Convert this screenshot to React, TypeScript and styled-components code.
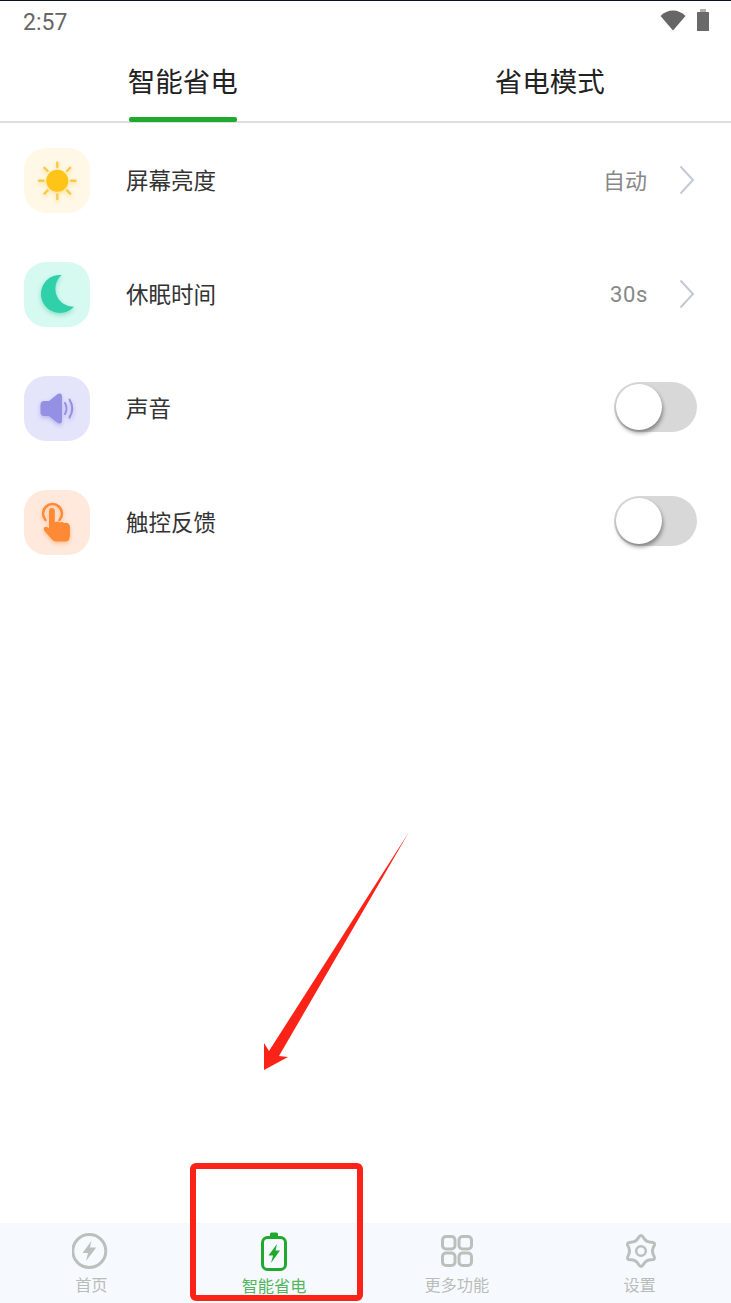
import styled, { createGlobalStyle } from 'styled-components';
import { ReactNode } from 'react';

const GlobalStyle = createGlobalStyle`
	html, body {
		margin: 0;
		padding: 0;
		background: #ffffff;
	}
	* {
		box-sizing: border-box;
	}
`;

const FONT = `"Noto Sans CJK SC", "Noto Sans", sans-serif`;

const Page = styled.div`
	position: relative;
	width: 731px;
	height: 1303px;
	display: flex;
	flex-direction: column;
	overflow: hidden;
	background: #ffffff;
	font-family: ${FONT};
	border-top: 1px solid #0c1220;
`;

const StatusBar = styled.div`
	height: 43px;
	padding: 0 22px 0 23px;
	display: flex;
	align-items: center;
	justify-content: space-between;
`;

const Clock = styled.span`
	font-family: Roboto, sans-serif;
	font-size: 23px;
	color: #666666;
`;

const StatusIcons = styled.div`
	display: flex;
	align-items: center;
	gap: 11px;
	padding-bottom: 5px;

	svg {
		display: block;
	}
`;

const Tabs = styled.div`
	height: 79px;
	display: grid;
	grid-template-columns: 1fr 1fr;
	border-bottom: 2px solid #dedede;
`;

const Tab = styled.div`
	display: flex;
	justify-content: center;

	& + & {
		padding-left: 3px;
	}
`;

const TabLabel = styled.div<{ $active?: boolean }>`
	position: relative;
	height: 78px;
	padding-bottom: 4px;
	display: flex;
	align-items: center;
	font-size: 27.5px;
	line-height: 1;
	color: #222222;

	&::after {
		content: '';
		display: ${(p) => (p.$active ? 'block' : 'none')};
		position: absolute;
		left: 1px;
		right: 1px;
		bottom: 0;
		height: 5px;
		border-radius: 2px;
		background: #20a92f;
	}
`;

const List = styled.div`
	display: flex;
	flex-direction: column;
	flex: 1;
`;

const Row = styled.div`
	height: 114px;
	padding: 0 36px 0 24px;
	display: flex;
	align-items: center;
`;

const IconTile = styled.div<{ $bg: string }>`
	width: 66px;
	height: 65px;
	border-radius: 22px;
	background: ${(p) => p.$bg};
	flex-shrink: 0;
	svg {
		display: block;
	}
`;

const RowLabel = styled.div`
	margin-left: 36px;
	padding-bottom: 3px;
	flex: 1;
	font-size: 22.5px;
	color: #333333;
`;

const RowValue = styled.div`
	font-size: 22px;
	padding-bottom: 3px;
	color: #888888;
	margin-right: 32px;
`;

const LatinValue = styled(RowValue)`
	font-family: Roboto, sans-serif;
	padding: 1px 0 0;
	margin-right: 31px;
	letter-spacing: 0.6px;
`;

const Toggle = styled.div`
	width: 83px;
	height: 50px;
	margin: 0 -2px 2px 0;
	padding-left: 2px;
	border-radius: 25px;
	background: #d8d8d8;
	display: flex;
	align-items: center;
`;

const ToggleKnob = styled.div`
	width: 46px;
	height: 46px;
	border-radius: 50%;
	background: #ffffff;
	box-shadow: 1px 3px 4px rgba(0, 0, 0, 0.4);
`;

const BottomNav = styled.nav`
	height: 80px;
	background: #f6faff;
	display: grid;
	grid-template-columns: repeat(4, 1fr);
`;

const NavItem = styled.div`
	display: flex;
	flex-direction: column;
	align-items: center;
	svg {
		display: block;
		margin-top: 9px;
	}
`;

const NavLabel = styled.span<{ $active?: boolean }>`
	font-size: 16.25px;
	line-height: 20px;
	margin-top: 4px;
	color: ${(p) => (p.$active ? '#55b45e' : '#b9bdb9')};
`;

const Highlight = styled.div`
	position: absolute;
	left: 190px;
	top: 1162px;
	width: 173px;
	height: 138px;
	border: 6px solid #fb2318;
	border-radius: 6px;
`;

const ArrowOverlay = styled.svg`
	position: absolute;
	left: 0;
	top: -1px;
	pointer-events: none;
`;

const Chevron = () => (
	<svg width="16" height="30" viewBox="0 0 16 30" fill="none">
		<path d="M1.5 1.5 L14 15 L1.5 28.5" stroke="#c3c8d2" strokeWidth="2" />
	</svg>
);

const SunIcon = () => (
	<svg width="66" height="65" viewBox="0 0 66 65" fill="none">
		<g style={{ filter: 'drop-shadow(0 2px 2px rgba(250,190,40,0.45))' }}>
			<circle cx="33.3" cy="32.7" r="11" fill="#fec418" />
			<g stroke="#fcc84a" strokeWidth="2.4" strokeLinecap="round">
				<path d="M33.3 14.5v4.5M33.3 46.5v4.5M15 32.7h4.5M47 32.7h4.5" />
				<path d="M20.4 19.8l3.2 3.2M43 42.4l3.2 3.2M20.4 45.6l3.2-3.2M43 23l3.2-3.2" />
			</g>
		</g>
	</svg>
);

const MoonIcon = () => (
	<svg width="66" height="65" viewBox="0 0 66 65" fill="none">
		<path
			d="M37.7 13 A19 19 0 1 0 50 44.7 A18 18 0 0 1 37.7 13 Z"
			fill="#2fd0aa"
			style={{ filter: 'drop-shadow(0 2px 2px rgba(40,190,150,0.45))' }}
		/>
	</svg>
);

const SpeakerIcon = () => (
	<svg width="66" height="65" viewBox="0 0 66 65" fill="none">
		<g style={{ filter: 'drop-shadow(0 2px 2px rgba(130,125,225,0.45))' }}>
			<path
				d="M20 25 h5 L33 18.5 c3-2 5-1 5 2 v24 c0 3-2 4-5 2 L25 40 h-5 c-2 0-3.5-1.5-3.5-3.5 v-8 c0-2 1.5-3.5 3.5-3.5z"
				fill="#9490e4"
			/>
			<path d="M41 27 q3 5.5 0 11M45.5 23.5 q5.5 9 0 18" stroke="#9490e4" strokeWidth="2" strokeLinecap="round" />
		</g>
	</svg>
);

const TouchIcon = () => (
	<svg width="66" height="65" viewBox="0 0 66 65" fill="none">
		<g style={{ filter: 'drop-shadow(0 2px 2px rgba(255,130,50,0.4))' }}>
			<path d="M21.5 30 a9.5 9.5 0 1 1 14 0" stroke="#ff8a35" strokeWidth="2.5" strokeLinecap="round" />
			<path
				d="M25 21 a2.9 2.9 0 0 1 5.8 0 v11 l1 0 q2.2-1 4 .4 q2.4-1.2 4.5 .6 q2.8-.8 4.5 1 q1.2 1 1.2 3 V44 q0 7.5 -4 7.5 H32 q-2.5 0-4-2 L20.5 41 q-1.5-2 -.5-3.5 q1.5-1.5 4 0 l1 .8 z"
				fill="#ff8a35"
			/>
		</g>
	</svg>
);

const HomeIcon = () => (
	<svg width="38" height="38" viewBox="0 0 38 38" fill="none">
		<circle cx="17.3" cy="19" r="16.5" stroke="#bcc0bc" strokeWidth="3" />
		<path d="M19.5 8.7 L10.5 21 H16 L14 29 L24.3 15.5 H18 Z" fill="#bcc0bc" />
	</svg>
);

const BatteryIcon = () => (
	<svg width="38" height="39" viewBox="0 0 38 39" fill="none">
		<path d="M15 2 q0-1.5 1.5-1.5 h5 q1.5 0 1.5 1.5 v2.5 h-8z" fill="#20a92f" />
		<rect x="7.5" y="5.5" width="23" height="32" rx="5" stroke="#20a92f" strokeWidth="3" />
		<path d="M22 12 L13.5 23.5 H18 L16 31 L25 18.5 H20.5 Z" fill="#20a92f" />
	</svg>
);

const GridIcon = () => (
	<svg width="38" height="38" viewBox="0 0 38 38" fill="none">
		<g stroke="#bcc0bc" strokeWidth="3">
			<rect x="4.5" y="4.5" width="12.5" height="12.5" rx="3.5" />
			<rect x="21" y="4.5" width="12.5" height="12.5" rx="3.5" />
			<rect x="4.5" y="21" width="12.5" height="12.5" rx="3.5" />
			<rect x="21" y="21" width="12.5" height="12.5" rx="3.5" />
		</g>
	</svg>
);

// six soft lobes, traced through the midpoints of an alternating star
const gearPath = (() => {
	const nodes = Array.from({ length: 12 }, (_, i) => {
		const angle = ((i * 30 - 90) * Math.PI) / 180;
		const r = i % 2 === 0 ? 17.7 : 10.2;
		return [20 + r * Math.cos(angle), 19 + r * Math.sin(angle)];
	});
	const mid = (a: number[], b: number[]) => [(a[0] + b[0]) / 2, (a[1] + b[1]) / 2];
	const start = mid(nodes[11], nodes[0]);
	let d = `M${start[0].toFixed(2)} ${start[1].toFixed(2)}`;
	nodes.forEach((n, i) => {
		const m = mid(n, nodes[(i + 1) % 12]);
		d += ` Q${n[0].toFixed(2)} ${n[1].toFixed(2)} ${m[0].toFixed(2)} ${m[1].toFixed(2)}`;
	});
	return `${d} Z`;
})();

const GearIcon = () => (
	<svg width="38" height="38" viewBox="0 0 38 38" fill="none">
		<path d={gearPath} stroke="#bcc0bc" strokeWidth="3" strokeLinejoin="round" />
		<circle cx="20" cy="19" r="4.8" stroke="#bcc0bc" strokeWidth="2.5" />
	</svg>
);

type Setting = {
	label: string;
	bg: string;
	icon: ReactNode;
	trailing: ReactNode;
};

const Switch = () => (
	<Toggle>
		<ToggleKnob />
	</Toggle>
);

const settings: Setting[] = [
	{
		label: '屏幕亮度',
		bg: '#fff8e6',
		icon: <SunIcon />,
		trailing: (
			<>
				<RowValue>自动</RowValue>
				<Chevron />
			</>
		)
	},
	{
		label: '休眠时间',
		bg: '#d6f9f0',
		icon: <MoonIcon />,
		trailing: (
			<>
				<LatinValue>30s</LatinValue>
				<Chevron />
			</>
		)
	},
	{ label: '声音', bg: '#e4e4fb', icon: <SpeakerIcon />, trailing: <Switch /> },
	{ label: '触控反馈', bg: '#ffe9dc', icon: <TouchIcon />, trailing: <Switch /> }
];

const navItems = [
	{ label: '首页', icon: <HomeIcon /> },
	{ label: '智能省电', icon: <BatteryIcon />, active: true },
	{ label: '更多功能', icon: <GridIcon /> },
	{ label: '设置', icon: <GearIcon /> }
];

const App = () => {
	return (
		<Page>
			<GlobalStyle />
			<StatusBar>
				<Clock>2:57</Clock>
				<StatusIcons>
					<svg width="26" height="21" viewBox="0 0 26 21">
						<path d="M13 20.5 L0.5 6 Q6 0.5 13 0.5 Q20 0.5 25.5 6 Z" fill="#666666" />
					</svg>
					<svg width="12" height="22" viewBox="0 0 12 22">
						<rect x="3" y="0" width="6" height="3" fill="#b0b0b0" />
						<rect x="0" y="3" width="12" height="19" rx="0.5" fill="#6a6a6a" />
					</svg>
				</StatusIcons>
			</StatusBar>
			<Tabs>
				<Tab>
					<TabLabel $active>智能省电</TabLabel>
				</Tab>
				<Tab>
					<TabLabel>省电模式</TabLabel>
				</Tab>
			</Tabs>
			<List>
				{settings.map((item) => (
					<Row key={item.label}>
						<IconTile $bg={item.bg}>{item.icon}</IconTile>
						<RowLabel>{item.label}</RowLabel>
						{item.trailing}
					</Row>
				))}
			</List>
			<BottomNav>
				{navItems.map((item) => (
					<NavItem key={item.label}>
						{item.icon}
						<NavLabel $active={item.active}>{item.label}</NavLabel>
					</NavItem>
				))}
			</BottomNav>
			<ArrowOverlay width="731" height="1303" viewBox="0 0 731 1303">
				<path
					d="M409 832 L279 1056 L288 1057 L264 1070 L264 1043 L269 1051 Z"
					fill="#fb2318"
				/>
			</ArrowOverlay>
			<Highlight />
		</Page>
	);
};

export default App;
